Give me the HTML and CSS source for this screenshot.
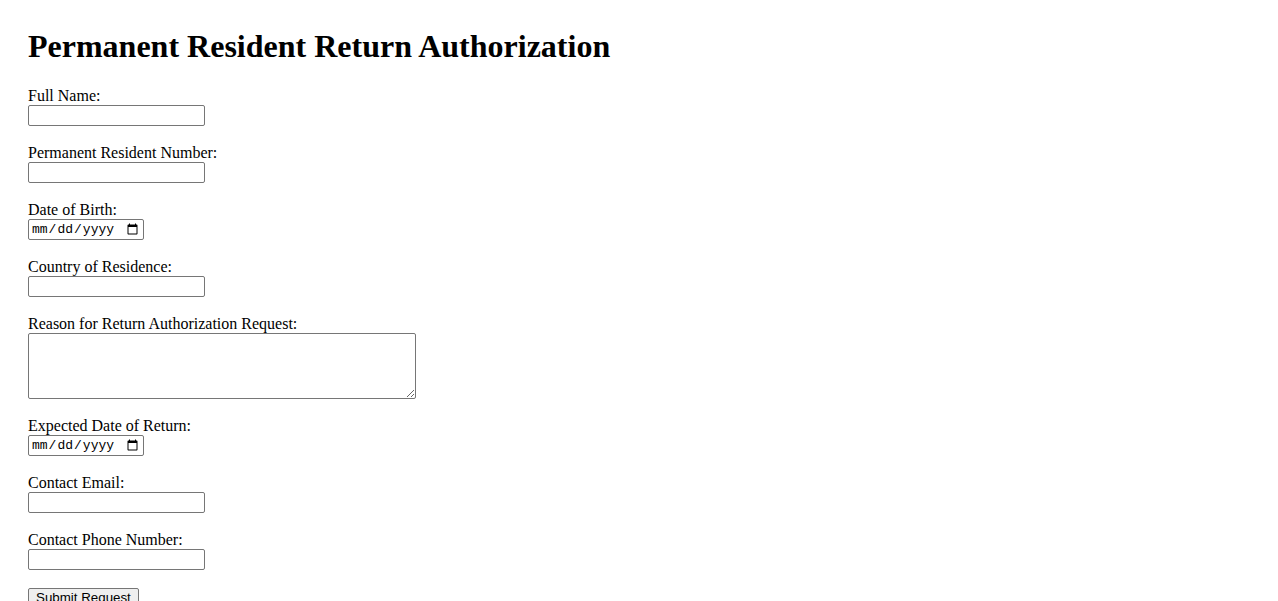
FILE: index.html
```html
<!DOCTYPE html>
<html lang="en">
<head>
    <meta charset="UTF-8">
    <meta name="viewport" content="width=device-width, initial-scale=1.0">
    <title>Permanent Resident Return Authorization</title>
    <link rel="stylesheet" href="styles.css">
</head>
<body>
    <div class="page">
        <h1>Permanent Resident Return Authorization</h1>

        <form class="return-form" onsubmit="event.preventDefault()">
            <div class="form-group">
                <label for="fullName">Full Name:</label>
                <input type="text" id="fullName" class="text-input">
            </div>

            <div class="form-group">
                <label for="residentNumber">Permanent Resident Number:</label>
                <input type="text" id="residentNumber" class="text-input">
            </div>

            <div class="form-group">
                <label for="birthDate">Date of Birth:</label>
                <input type="date" id="birthDate" class="date-input">
            </div>

            <div class="form-group">
                <label for="country">Country of Residence:</label>
                <input type="text" id="country" class="text-input">
            </div>

            <div class="form-group">
                <label for="reason">Reason for Return Authorization Request:</label>
                <textarea id="reason" class="reason-input"></textarea>
            </div>

            <div class="form-group">
                <label for="returnDate">Expected Date of Return:</label>
                <input type="date" id="returnDate" class="date-input">
            </div>

            <div class="form-group">
                <label for="email">Contact Email:</label>
                <input type="email" id="email" class="text-input">
            </div>

            <div class="form-group">
                <label for="phone">Contact Phone Number:</label>
                <input type="tel" id="phone" class="text-input">
            </div>

            <button type="submit" class="submit-btn">Submit Request</button>
        </form>
    </div>
</body>
</html>
```

FILE: styles.css
```css
body {
    margin: 0;
    background-color: #fff;
    color: #000;
    font-family: 'Liberation Serif', 'Times New Roman', serif;
    font-size: 16px;
}

.page {
    padding: 28px;
}

h1 {
    margin: 0 0 22px;
    font-size: 32px;
    font-weight: bold;
    line-height: 37px;
}

.form-group {
    margin-bottom: 18px;
}

.form-group label {
    display: block;
    line-height: 18px;
}

.text-input,
.date-input,
.reason-input {
    display: block;
    margin: 0;
    box-sizing: border-box;
    border: 1px solid #767676;
    border-radius: 2px;
    background-color: #fff;
    font-family: 'Liberation Sans', Arial, sans-serif;
    font-size: 13.33px;
}

.text-input {
    width: 177px;
    height: 21px;
    padding: 1px 2px;
}

.date-input {
    width: 116px;
    height: 21px;
    padding: 1px 2px;
    font-family: 'Liberation Mono', 'DejaVu Sans Mono', monospace;
    font-size: 13px;
    color: #000;
}

.reason-input {
    width: 388px;
    height: 66px;
    padding: 2px;
    resize: vertical;
}

.submit-btn {
    display: block;
    margin: 0;
    padding: 1px 7px;
    border: 1px solid #767676;
    border-radius: 2px;
    background-color: #efefef;
    color: #000;
    font-family: 'Liberation Sans', Arial, sans-serif;
    font-size: 13.33px;
    cursor: pointer;
}
```
